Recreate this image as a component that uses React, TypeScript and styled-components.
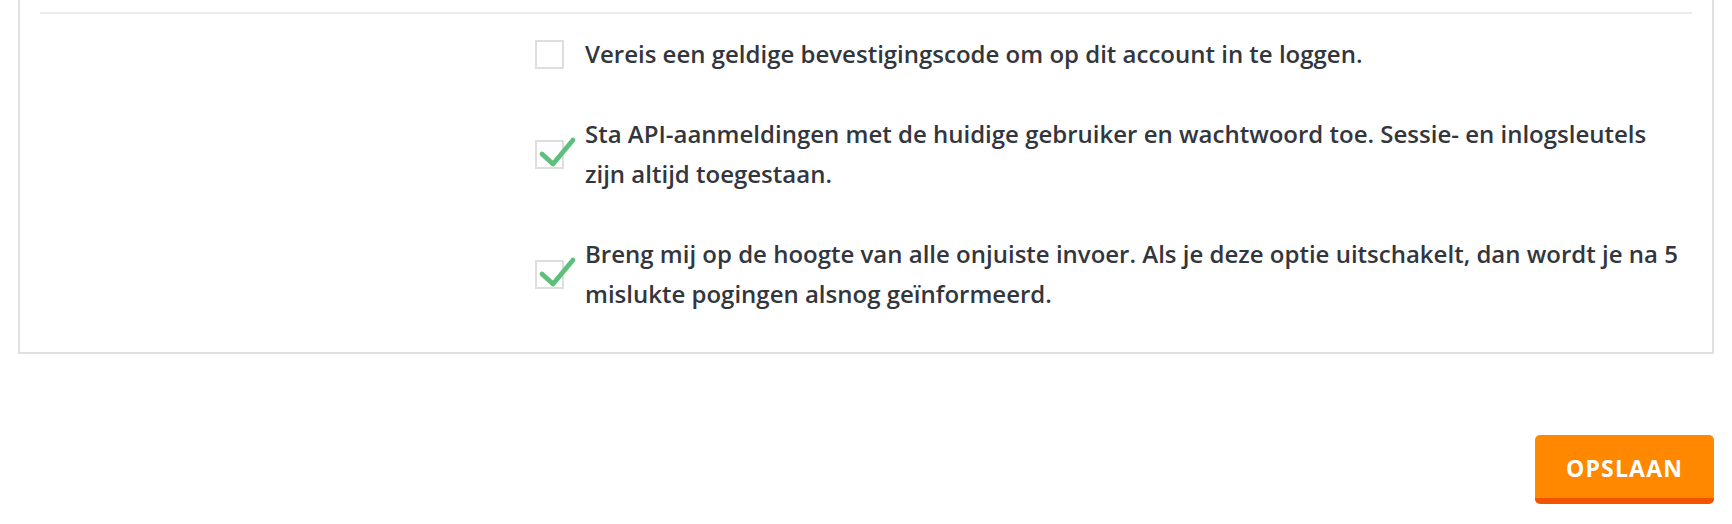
import { useState } from "react";
import { createGlobalStyle, styled } from "styled-components";

const GlobalStyle = createGlobalStyle`
  html, body {
    margin: 0;
    padding: 0;
    background: #ffffff;
  }
  body {
    font-family: "Open Sans", "Noto Sans", Arial, sans-serif;
    color: #33363d;
  }
`;

const Page = styled.div`
  padding: 0 18px;
`;

const Panel = styled.section`
  border: 2px solid #e0e0e0;
  border-top: none;
  padding: 12px 20px 38px;
`;

const Divider = styled.hr`
  height: 2px;
  margin: 0 0 20px;
  border: none;
  background: #ececec;
`;

const OptionList = styled.div`
  display: flex;
  flex-direction: column;
  gap: 40px;
  padding-left: 495px;
`;

const Option = styled.label`
  display: flex;
  align-items: center;
  gap: 21px;
  cursor: pointer;
`;

const Box = styled.span`
  position: relative;
  flex: 0 0 auto;
  width: 25px;
  height: 25px;
  border: 2px solid #dedede;
  background: #ffffff;
`;

const Tick = styled.svg`
  position: absolute;
  left: 0;
  top: -6px;
  width: 42px;
  height: 32px;
  overflow: visible;
`;

const HiddenInput = styled.input`
  position: absolute;
  opacity: 0;
  width: 0;
  height: 0;
`;

const OptionText = styled.span`
  font-size: 24px;
  line-height: 40px;
  font-weight: 600;
  color: #33363d;
`;

const Footer = styled.div`
  display: flex;
  justify-content: flex-end;
  padding-top: 81px;
`;

const SaveButton = styled.button`
  width: 179px;
  height: 69px;
  padding: 2px 0 0;
  border: none;
  border-bottom: 6px solid #f25400;
  border-radius: 5px;
  background: #ff8800;
  color: #ffffff;
  font-family: "Open Sans", Arial, sans-serif;
  font-size: 23px;
  font-weight: 700;
  letter-spacing: 1.2px;
  cursor: pointer;
`;

type Setting = {
  id: string;
  text: string;
  checked: boolean;
};

const initialSettings: Setting[] = [
  {
    id: "twofactor",
    text: "Vereis een geldige bevestigingscode om op dit account in te loggen.",
    checked: false,
  },
  {
    id: "apilogin",
    text: "Sta API-aanmeldingen met de huidige gebruiker en wachtwoord toe. Sessie- en inlogsleutels zijn altijd toegestaan.",
    checked: true,
  },
  {
    id: "notify",
    text: "Breng mij op de hoogte van alle onjuiste invoer. Als je deze optie uitschakelt, dan wordt je na 5 mislukte pogingen alsnog geïnformeerd.",
    checked: true,
  },
];

function CheckMark() {
  return (
    <Tick viewBox="0 0 42 32" aria-hidden="true">
      <path
        d="M5 18 L16 28 L36 4"
        fill="none"
        stroke="#5cbf7b"
        strokeWidth="4.8"
        strokeLinecap="round"
        strokeLinejoin="round"
      />
    </Tick>
  );
}

export default function App() {
  const [settings, setSettings] = useState(initialSettings);

  const toggle = (id: string) =>
    setSettings((list) => list.map((s) => (s.id === id ? { ...s, checked: !s.checked } : s)));

  return (
    <Page>
      <GlobalStyle />
      <Panel>
        <Divider />
        <OptionList>
          {settings.map((s) => (
            <Option key={s.id}>
              <HiddenInput type="checkbox" checked={s.checked} onChange={() => toggle(s.id)} />
              <Box>{s.checked && <CheckMark />}</Box>
              <OptionText>{s.text}</OptionText>
            </Option>
          ))}
        </OptionList>
      </Panel>
      <Footer>
        <SaveButton type="button">OPSLAAN</SaveButton>
      </Footer>
    </Page>
  );
}
